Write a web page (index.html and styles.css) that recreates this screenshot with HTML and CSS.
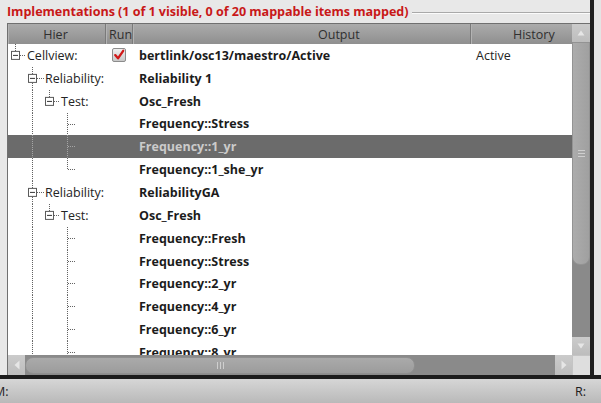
FILE: index.html
```html
<!DOCTYPE html>
<html>
<head>
<meta charset="utf-8">
<link rel="stylesheet" href="styles.css">
</head>
<body>
<div class="window">
  <div class="top">
    <div class="panel">
      <div class="titlerow">
        <span class="title">Implementations (1 of 1 visible, 0 of 20 mappable items mapped)</span>
        <span class="groove"></span>
      </div>
      <div class="frame">
        <div class="view">
          <div class="tree">
            <div class="header">
              <div class="hcell h-hier">Hier</div>
              <div class="hcell h-run">Run</div>
              <div class="hcell h-out">Output</div>
              <div class="hcell h-hist">History</div>
            </div>
            <div class="rows">
              <div class="row">
                <div class="cell hier">
                  <svg class="br" width="19" viewBox="0 0 19 22.85"><line class="dot" x1="7.5" y1="0" x2="7.5" y2="7"/><rect class="box" x="3.5" y="7.4" width="8" height="8"/><line class="minus" x1="5" y1="11.4" x2="10" y2="11.4"/><line class="dot" x1="12" y1="11.5" x2="18" y2="11.5"/></svg>
                  <span>Cellview:</span>
                </div>
                <div class="cell run">
                  <svg class="chk" width="14" height="14" viewBox="0 0 14 14"><defs><linearGradient id="cg" x1="0" y1="0" x2="0" y2="1"><stop offset="0" stop-color="#f2f2f2"/><stop offset="1" stop-color="#c6c6c6"/></linearGradient></defs><rect x="0.5" y="0.5" width="13" height="13" rx="1.5" fill="url(#cg)" stroke="#8c8c8c"/><path d="M3.2 7.1 L6 10.3 L11.2 2.8" fill="none" stroke="#d01818" stroke-width="2.3" stroke-linecap="round" stroke-linejoin="round"/></svg>
                </div>
                <div class="cell out">bertlink/osc13/maestro/Active</div>
                <div class="cell hist">Active</div>
              </div>
              <div class="row">
                <div class="cell hier">
                  <svg class="br" width="37" viewBox="0 0 37 22.85"><line class="dot" x1="24.5" y1="0" x2="24.5" y2="7"/><rect class="box" x="20.5" y="7.4" width="8" height="8"/><line class="minus" x1="22" y1="11.4" x2="27" y2="11.4"/><line class="dot" x1="24.5" y1="16" x2="24.5" y2="22.85"/><line class="dot" x1="29" y1="11.5" x2="36" y2="11.5"/></svg>
                  <span>Reliability:</span>
                </div>
                <div class="cell run"></div>
                <div class="cell out">Reliability 1</div>
                <div class="cell hist"></div>
              </div>
              <div class="row">
                <div class="cell hier">
                  <svg class="br" width="53" viewBox="0 0 53 22.85"><line class="dot" x1="24.5" y1="0" x2="24.5" y2="22.85"/><line class="dot" x1="41.5" y1="0" x2="41.5" y2="7"/><rect class="box" x="37.5" y="7.4" width="8" height="8"/><line class="minus" x1="39" y1="11.4" x2="44" y2="11.4"/><line class="dot" x1="46" y1="11.5" x2="52" y2="11.5"/></svg>
                  <span>Test:</span>
                </div>
                <div class="cell run"></div>
                <div class="cell out">Osc_Fresh</div>
                <div class="cell hist"></div>
              </div>
              <div class="row">
                <div class="cell hier">
                  <svg class="br" width="70" viewBox="0 0 70 22.85"><line class="dot" x1="24.5" y1="0" x2="24.5" y2="22.85"/><line class="dot" x1="59.5" y1="0" x2="59.5" y2="22.85"/><line class="dot" x1="60" y1="11.5" x2="68" y2="11.5"/></svg>
                </div>
                <div class="cell run"></div>
                <div class="cell out">Frequency::Stress</div>
                <div class="cell hist"></div>
              </div>
              <div class="row sel">
                <div class="cell hier">
                  <svg class="br" width="70" viewBox="0 0 70 22.85"><line class="dot" x1="24.5" y1="0" x2="24.5" y2="22.85"/><line class="dot" x1="59.5" y1="0" x2="59.5" y2="22.85"/><line class="dot" x1="60" y1="11.5" x2="68" y2="11.5"/></svg>
                </div>
                <div class="cell run"></div>
                <div class="cell out">Frequency::1_yr</div>
                <div class="cell hist"></div>
              </div>
              <div class="row">
                <div class="cell hier">
                  <svg class="br" width="70" viewBox="0 0 70 22.85"><line class="dot" x1="24.5" y1="0" x2="24.5" y2="22.85"/><line class="dot" x1="59.5" y1="0" x2="59.5" y2="11.5"/><line class="dot" x1="60" y1="11.5" x2="68" y2="11.5"/></svg>
                </div>
                <div class="cell run"></div>
                <div class="cell out">Frequency::1_she_yr</div>
                <div class="cell hist"></div>
              </div>
              <div class="row">
                <div class="cell hier">
                  <svg class="br" width="37" viewBox="0 0 37 22.85"><line class="dot" x1="24.5" y1="0" x2="24.5" y2="7"/><rect class="box" x="20.5" y="7.4" width="8" height="8"/><line class="minus" x1="22" y1="11.4" x2="27" y2="11.4"/><line class="dot" x1="24.5" y1="16" x2="24.5" y2="22.85"/><line class="dot" x1="29" y1="11.5" x2="36" y2="11.5"/></svg>
                  <span>Reliability:</span>
                </div>
                <div class="cell run"></div>
                <div class="cell out">ReliabilityGA</div>
                <div class="cell hist"></div>
              </div>
              <div class="row">
                <div class="cell hier">
                  <svg class="br" width="53" viewBox="0 0 53 22.85"><line class="dot" x1="24.5" y1="0" x2="24.5" y2="22.85"/><line class="dot" x1="41.5" y1="0" x2="41.5" y2="7"/><rect class="box" x="37.5" y="7.4" width="8" height="8"/><line class="minus" x1="39" y1="11.4" x2="44" y2="11.4"/><line class="dot" x1="46" y1="11.5" x2="52" y2="11.5"/></svg>
                  <span>Test:</span>
                </div>
                <div class="cell run"></div>
                <div class="cell out">Osc_Fresh</div>
                <div class="cell hist"></div>
              </div>
              <div class="row">
                <div class="cell hier">
                  <svg class="br" width="70" viewBox="0 0 70 22.85"><line class="dot" x1="24.5" y1="0" x2="24.5" y2="22.85"/><line class="dot" x1="59.5" y1="0" x2="59.5" y2="22.85"/><line class="dot" x1="60" y1="11.5" x2="68" y2="11.5"/></svg>
                </div>
                <div class="cell run"></div>
                <div class="cell out">Frequency::Fresh</div>
                <div class="cell hist"></div>
              </div>
              <div class="row">
                <div class="cell hier">
                  <svg class="br" width="70" viewBox="0 0 70 22.85"><line class="dot" x1="24.5" y1="0" x2="24.5" y2="22.85"/><line class="dot" x1="59.5" y1="0" x2="59.5" y2="22.85"/><line class="dot" x1="60" y1="11.5" x2="68" y2="11.5"/></svg>
                </div>
                <div class="cell run"></div>
                <div class="cell out">Frequency::Stress</div>
                <div class="cell hist"></div>
              </div>
              <div class="row">
                <div class="cell hier">
                  <svg class="br" width="70" viewBox="0 0 70 22.85"><line class="dot" x1="24.5" y1="0" x2="24.5" y2="22.85"/><line class="dot" x1="59.5" y1="0" x2="59.5" y2="22.85"/><line class="dot" x1="60" y1="11.5" x2="68" y2="11.5"/></svg>
                </div>
                <div class="cell run"></div>
                <div class="cell out">Frequency::2_yr</div>
                <div class="cell hist"></div>
              </div>
              <div class="row">
                <div class="cell hier">
                  <svg class="br" width="70" viewBox="0 0 70 22.85"><line class="dot" x1="24.5" y1="0" x2="24.5" y2="22.85"/><line class="dot" x1="59.5" y1="0" x2="59.5" y2="22.85"/><line class="dot" x1="60" y1="11.5" x2="68" y2="11.5"/></svg>
                </div>
                <div class="cell run"></div>
                <div class="cell out">Frequency::4_yr</div>
                <div class="cell hist"></div>
              </div>
              <div class="row">
                <div class="cell hier">
                  <svg class="br" width="70" viewBox="0 0 70 22.85"><line class="dot" x1="24.5" y1="0" x2="24.5" y2="22.85"/><line class="dot" x1="59.5" y1="0" x2="59.5" y2="22.85"/><line class="dot" x1="60" y1="11.5" x2="68" y2="11.5"/></svg>
                </div>
                <div class="cell run"></div>
                <div class="cell out">Frequency::6_yr</div>
                <div class="cell hist"></div>
              </div>
              <div class="row">
                <div class="cell hier">
                  <svg class="br" width="70" viewBox="0 0 70 22.85"><line class="dot" x1="24.5" y1="0" x2="24.5" y2="22.85"/><line class="dot" x1="59.5" y1="0" x2="59.5" y2="22.85"/><line class="dot" x1="60" y1="11.5" x2="68" y2="11.5"/></svg>
                </div>
                <div class="cell run"></div>
                <div class="cell out">Frequency::8_yr</div>
                <div class="cell hist"></div>
              </div>
            </div>
          </div>
          <div class="vscroll">
            <div class="sbtn vbtn"><svg width="8" height="6" viewBox="0 0 8 6"><polygon points="4,0.5 7.5,5.5 0.5,5.5" fill="#e6e6e6"/></svg></div>
            <div class="vhandle"><span class="vgrip"></span></div>
            <div class="vtrough"></div>
            <div class="sbtn vbtn"><svg width="8" height="6" viewBox="0 0 8 6"><polygon points="0.5,0.5 7.5,0.5 4,5.5" fill="#e6e6e6"/></svg></div>
          </div>
        </div>
        <div class="hbar">
          <div class="sbtn hbtn"><svg width="6" height="10" viewBox="0 0 6 10"><polygon points="5.5,0.5 5.5,9.5 0.5,5" fill="#e6e6e6"/></svg></div>
          <div class="htrack"><div class="hhandle"><span class="hgrip"></span></div></div>
          <div class="sbtn hbtn"><svg width="6" height="10" viewBox="0 0 6 10"><polygon points="0.5,0.5 0.5,9.5 5.5,5" fill="#e6e6e6"/></svg></div>
          <div class="corner"></div>
        </div>
      </div>
    </div>
    <div class="edge"></div>
  </div>
  <div class="band"></div>
  <div class="status"><span class="m">M:</span><span class="r">R:</span></div>
</div>
</body>
</html>
```

FILE: styles.css
```css
html, body {
  margin: 0;
  padding: 0;
}
body {
  background: #e6e6e6;
  font-family: "Open Sans", "Noto Sans", sans-serif;
  font-size: 12.5px;
  color: #242424;
}
.window {
  width: 601px;
  height: 403px;
  display: flex;
  flex-direction: column;
  overflow: hidden;
}
.top {
  height: 375px;
  display: flex;
  flex: none;
}
.panel {
  width: 590px;
  padding-left: 7px;
  box-sizing: border-box;
  display: flex;
  flex-direction: column;
  background: #e8e8e8;
}
.titlerow {
  height: 23px;
  display: flex;
  align-items: center;
  gap: 4px;
  flex: none;
}
.title {
  color: #c81818;
  font-weight: 700;
  font-size: 12.6px;
  white-space: nowrap;
  letter-spacing: -0.05px;
}
.groove {
  flex: 1;
  height: 0;
  border-top: 1px solid #a9a9a9;
  border-bottom: 1px solid #fbfbfb;
  margin-top: 2px;
}
.frame {
  border-left: 1px solid #707070;
  border-top: 1px solid #707070;
  display: flex;
  flex-direction: column;
  flex: 1;
}
.view {
  height: 331px;
  display: flex;
  flex: none;
}
.tree {
  width: 564px;
  background: #ffffff;
  display: flex;
  flex-direction: column;
  overflow: hidden;
}
.header {
  height: 20px;
  flex: none;
  display: grid;
  grid-template-columns: 98px 27px 338px 101px;
  background: linear-gradient(#ababab, #8f8f8f);
  color: #303030;
}
.hcell {
  display: flex;
  align-items: center;
  border-right: 1px solid #7a7a7a;
  box-shadow: inset 1px 0 #b3b3b3;
  white-space: nowrap;
}
.h-hier { justify-content: center; padding-right: 2px; }
.h-run { padding-left: 3px; }
.h-out { padding-left: 185px; }
.h-hist { padding-left: 42px; border-right: none; }
.rows {
  flex: 1;
  overflow: hidden;
}
.row {
  height: 22.85px;
  display: grid;
  grid-template-columns: 98px 27px 338px 101px;
}
.cell {
  display: flex;
  align-items: center;
  white-space: nowrap;
  overflow: hidden;
}
.hier { height: 22.85px; }
.br {
  height: 22.85px;
  flex: none;
}
.dot {
  stroke: #5e5e5e;
  stroke-width: 1;
  stroke-dasharray: 1 1;
  fill: none;
}
.box {
  fill: #ffffff;
  stroke: #5a5a5a;
  stroke-width: 1;
}
.minus {
  stroke: #333333;
  stroke-width: 1;
}
.run { padding-left: 6px; }
.out {
  padding-left: 6px;
  font-weight: 700;
  color: #1c1c1c;
}
.hist { padding-left: 5px; }
.sel {
  background: #6b6b6b;
  color: #cbcbcb;
}
.sel .out { color: #cbcbcb; }
.sel .dot { stroke: #a8a8a8; }

.vscroll {
  width: 18px;
  display: flex;
  flex-direction: column;
  background: #8a8a8a;
}
.sbtn {
  background: linear-gradient(#cbcbcb, #bdbdbd);
  display: flex;
  align-items: center;
  justify-content: center;
  flex: none;
}
.vbtn { height: 18px; }
.vhandle {
  height: 223px;
  flex: none;
  box-sizing: border-box;
  background: linear-gradient(to right, #acacac, #a0a0a0);
  border: 1px solid #939393;
  border-radius: 0 0 8px 8px;
  display: flex;
  align-items: center;
  justify-content: center;
}
.vgrip {
  width: 7px;
  height: 5px;
  border-top: 1px solid #cfcfcf;
  border-bottom: 1px solid #cfcfcf;
  background: linear-gradient(#cfcfcf, #cfcfcf) center / 100% 1px no-repeat;
}
.vtrough { flex: 1; }

.hbar {
  height: 20px;
  display: flex;
  flex: none;
  background: #8a8a8a;
}
.hbtn { width: 17px; }
.htrack {
  flex: 1;
  display: flex;
  align-items: center;
}
.hhandle {
  width: 390px;
  height: 17px;
  box-sizing: border-box;
  background: linear-gradient(#aaaaaa, #9c9c9c);
  border: 1px solid #8f8f8f;
  border-radius: 8px;
  display: flex;
  align-items: center;
  justify-content: center;
}
.hgrip {
  width: 5px;
  height: 7px;
  border-left: 1px solid #cfcfcf;
  border-right: 1px solid #cfcfcf;
  background: linear-gradient(#cfcfcf, #cfcfcf) center / 1px 100% no-repeat;
}
.corner {
  width: 18px;
  background: #dedede;
  box-shadow: inset 1px 1px #c4c4c4;
}
.edge {
  width: 11px;
  background: linear-gradient(to right, #1e1e1e 4px, #e4e4e4 4px);
}
.band {
  height: 4px;
  background: #1c1c1c;
  flex: none;
}
.status {
  height: 24px;
  flex: none;
  display: flex;
  align-items: center;
  justify-content: space-between;
  background: linear-gradient(#d6d6d6, #b9b9b9);
  padding-right: 15px;
  color: #202020;
}
.m { margin-left: -6px; }
```
